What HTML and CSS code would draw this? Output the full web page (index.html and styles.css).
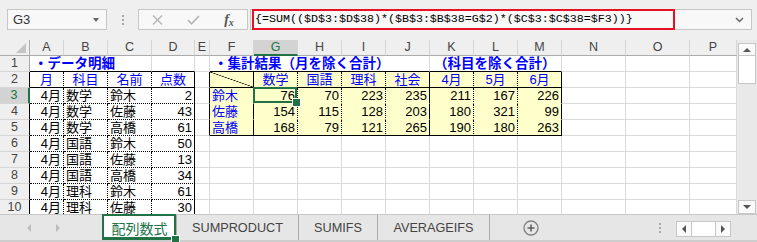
FILE: index.html
```html
<!DOCTYPE html>
<html lang="ja">
<head>
  <meta charset="UTF-8" />
  <meta name="viewport" content="width=device-width, initial-scale=1.0" />
  <title>配列数式</title>
  <link rel="stylesheet" href="styles.css">
</head>
<body>
  <div class="window">
    <div class="formula-bar">
      <div class="name-box"><span>G3</span><span class="drop"></span></div>
      <div class="grip"></div>
      <div class="fx-buttons">
        <span class="fx-slot">
          <svg width="11" height="10" viewBox="0 0 11 10"><path d="M1 0.5 L10 9.5 M10 0.5 L1 9.5" stroke="#b4b4b4" stroke-width="1.3" fill="none"/></svg>
        </span>
        <span class="fx-slot">
          <svg width="13" height="10" viewBox="0 0 13 10"><path d="M1 5 L4.5 8.8 L12 1" stroke="#b4b4b4" stroke-width="1.6" fill="none"/></svg>
        </span>
        <span class="fx-slot fx-text">f<span>x</span></span>
      </div>
      <div class="formula">
        <div class="formula-text">{=SUM(($D$3:$D$38)*($B$3:$B$38=G$2)*($C$3:$C$38=$F3))}</div>
        <svg class="chev" width="9" height="6" viewBox="0 0 9 6"><path d="M1 1 L4.5 4.5 L8 1" stroke="#666" stroke-width="1.5" fill="none"/></svg>
      </div>
    </div>

    <div class="sheet">
      <div class="grid" id="grid"></div>
      <div class="vscroll">
        <div class="sb-btn up"><span></span></div>
        <div class="sb-thumb"></div>
        <div class="sb-track"></div>
        <div class="sb-btn down"><span></span></div>
      </div>
    </div>

    <div class="tabs">
      <div class="tab-nav"><span class="arr arr-left"></span><span class="arr arr-right"></span></div>
      <div class="tab active">配列数式</div>
      <div class="tab tab-sumproduct">SUMPRODUCT</div>
      <div class="tab tab-sumifs">SUMIFS</div>
      <div class="tab tab-averageifs">AVERAGEIFS</div>
      <div class="add-sheet">
        <svg width="16" height="16" viewBox="0 0 16 16"><circle cx="8" cy="8" r="7" stroke="#808080" stroke-width="1.3" fill="none"/><path d="M8 4.5 V11.5 M4.5 8 H11.5" stroke="#606060" stroke-width="1.6"/></svg>
      </div>
      <div class="grip grip-h"></div>
      <div class="hscroll">
        <div class="hs-btn"><span class="hs-left"></span></div>
        <div class="hs-thumb"></div>
        <div class="hs-btn"><span class="hs-right"></span></div>
      </div>
    </div>
  </div>

  <script>
    const letters = "ABCDEFGHIJKLMNOP".split("");
    const detailHeads = ["月", "科目", "名前", "点数"];
    const detail = [
      ["4月", "数学", "鈴木", 2],
      ["4月", "数学", "佐藤", 43],
      ["4月", "数学", "高橋", 61],
      ["4月", "国語", "鈴木", 50],
      ["4月", "国語", "佐藤", 13],
      ["4月", "国語", "高橋", 34],
      ["4月", "理科", "鈴木", 61],
      ["4月", "理科", "佐藤", 30],
    ];
    const sumHeads = ["数学", "国語", "理科", "社会", "4月", "5月", "6月"];
    const summary = [
      ["鈴木", 76, 70, 223, 235, 211, 167, 226],
      ["佐藤", 154, 115, 128, 203, 180, 321, 99],
      ["高橋", 168, 79, 121, 265, 190, 180, 263],
    ];

    function cellFor(r, c) {
      const cls = ["cell"];
      let text = "";
      if (c <= 3) {
        // データ明細 A2:D10
        cls.push(c === 3 ? "v-solid" : "v-dot");
        cls.push(r === 2 ? "h-solid" : "h-dot");
        if (r === 2) {
          text = detailHeads[c];
          cls.push("head");
        } else {
          text = detail[r - 3][c];
          if (c === 0 || c === 3) cls.push("num");
        }
      } else if (c === 4) {
        if (r <= 5) cls.push("v-solid");
      } else if (c <= 12 && r <= 5) {
        // 集計結果 F2:M5
        cls.push("fill");
        cls.push(c === 5 || c === 9 || c === 12 ? "v-solid" : "v-dot");
        cls.push(r === 2 || r === 5 ? "h-solid" : "h-none");
        if (r === 2) {
          if (c === 5) cls.push("diag");
          else {
            text = sumHeads[c - 6];
            cls.push("head");
          }
        } else {
          text = summary[r - 3][c - 5];
          cls.push(c === 5 ? "name" : "num");
          if (r === 3 && c === 6) cls.push("active");
        }
      }
      return `<div class="${cls.join(" ")}">${text}</div>`;
    }

    function renderGrid() {
      let html = '<div class="corner"></div>';
      letters.forEach((l) => {
        html += `<div class="col-head${l === "G" ? " sel" : ""}">${l}</div>`;
      });
      for (let r = 1; r <= 10; r++) {
        let cls = "row-head";
        if (r >= 2) cls += " edge";
        if (r === 3) cls += " sel";
        html += `<div class="${cls}">${r}</div>`;
        if (r === 1) {
          html += '<div class="cell title top-line span3">・データ明細</div>';
          html += '<div class="cell top-line"></div>';
          html += '<div class="cell"></div>';
          html += '<div class="cell title top-line span5">・集計結果（月を除く合計）</div>';
          html += '<div class="cell title top-line span3">（科目を除く合計）</div>';
          html += '<div class="cell"></div><div class="cell"></div><div class="cell"></div>';
          continue;
        }
        letters.forEach((l, c) => {
          html += cellFor(r, c);
        });
      }
      document.getElementById("grid").innerHTML = html;
    }

    renderGrid();
  </script>
</body>
</html>
```

FILE: styles.css
```css
* {
  box-sizing: border-box;
}
body {
  margin: 0;
  background: #fff;
  font-family: "Liberation Sans", "Noto Sans CJK JP", sans-serif;
}
.window {
  width: 757px;
  height: 242px;
  overflow: hidden;
  background: #fff;
}

/* formula bar */
.formula-bar {
  height: 40px;
  display: flex;
  align-items: flex-start;
  padding-top: 9px;
  background: #efefef;
}
.name-box {
  margin-left: 7px;
  width: 100px;
  height: 21px;
  border: 1px solid #c6c6c6;
  background: #f8f8f8;
  display: flex;
  align-items: center;
  justify-content: space-between;
  padding: 0 7px 0 5px;
  font-size: 13px;
  color: #333;
}
.drop {
  border-left: 3.5px solid transparent;
  border-right: 3.5px solid transparent;
  border-top: 4px solid #666;
}
.grip {
  width: 31px;
  height: 21px;
  display: flex;
  justify-content: center;
  align-items: center;
}
.grip::before {
  content: "";
  height: 10px;
  border-left: 2px dotted #a8a8a8;
}
.fx-buttons {
  width: 110px;
  height: 21px;
  border: 1px solid #c6c6c6;
  background: #f8f8f8;
  display: flex;
  align-items: center;
}
.fx-slot {
  width: 36px;
  display: flex;
  justify-content: center;
  align-items: center;
}
.fx-text {
  font-family: "Liberation Serif", serif;
  font-style: italic;
  font-weight: bold;
  font-size: 14px;
  color: #555;
}
.fx-text span {
  font-size: 10px;
  margin-top: 5px;
}
.formula {
  margin-left: 2px;
  width: 502px;
  height: 21px;
  border: 1px solid #c6c6c6;
  background: #f8f8f8;
  display: flex;
  align-items: center;
}
.formula-text {
  margin: -1px 0 -1px 1px;
  height: 21px;
  width: 423px;
  border: 2px solid #e81123;
  padding-left: 1px;
  font-family: "Liberation Mono", monospace;
  font-size: 11.67px;
  line-height: 17px;
  color: #000;
  white-space: nowrap;
}
.chev {
  margin-left: auto;
  margin-right: 7px;
}

/* sheet grid */
.sheet {
  display: flex;
  height: 174px;
}
.grid {
  width: 737px;
  display: grid;
  grid-template-columns: 30px 34px 44px 44px 43px 15px repeat(8, 44px) 64px 64px 47px;
  grid-auto-rows: 16px;
  overflow: hidden;
  font-size: 13px;
  line-height: 15px;
  color: #000;
}
.corner {
  background: #efefef;
  border-right: 1px solid #ababab;
  border-bottom: 1px solid #ababab;
  position: relative;
}
.corner::after {
  content: "";
  position: absolute;
  right: 3px;
  bottom: 2px;
  border-left: 10px solid transparent;
  border-bottom: 10px solid #c4c4c4;
}
.col-head {
  background: #efefef;
  border-right: 1px solid #d5d5d5;
  border-bottom: 1px solid #ababab;
  text-align: center;
  font-size: 12.5px;
  color: #444;
}
.col-head.sel {
  background: #d3d3d3;
  color: #217346;
  border-bottom: 2px solid #217346;
}
.row-head {
  background: #efefef;
  border-right: 1px solid #ababab;
  border-bottom: 1px solid #d5d5d5;
  text-align: center;
  font-size: 12.5px;
  color: #444;
}
.row-head.edge {
  border-right-color: #000;
}
.row-head.sel {
  background: #d3d3d3;
  color: #217346;
  border-right: 2px solid #217346;
}
.cell {
  border-right: 1px solid #dadada;
  border-bottom: 1px solid #dadada;
  padding: 0 2px;
  white-space: nowrap;
}
.span3 {
  grid-column: span 3;
}
.span5 {
  grid-column: span 5;
}
.top-line {
  border-bottom: 1px solid #000;
}
.v-dot {
  border-right: 1px dotted #000;
}
.v-solid {
  border-right: 1px solid #000;
}
.h-solid {
  border-bottom: 1px solid #000;
}
.h-dot {
  border-bottom: 1px dotted #000;
}
.fill {
  background: #ffffcc;
}
.h-none {
  border-bottom-color: #ffffcc;
}
.title {
  color: #0000ff;
  font-weight: bold;
  font-size: 13.5px;
  padding-left: 4px;
}
.head {
  color: #0000ff;
  text-align: center;
}
.name {
  color: #0000ff;
}
.num {
  text-align: right;
}
.diag {
  background: linear-gradient(to top right, #ffffcc calc(50% - 0.6px), #000 50%, #ffffcc calc(50% + 0.6px));
}
.active {
  position: relative;
  z-index: 1;
}
.active::before {
  content: "";
  position: absolute;
  top: -1px;
  left: -1px;
  right: 0;
  bottom: 0;
  border: 2px solid #217346;
}
.active::after {
  content: "";
  position: absolute;
  right: -4px;
  bottom: -4px;
  width: 7px;
  height: 7px;
  background: #217346;
  border: 1px solid #fff;
}

/* vertical scrollbar */
.vscroll {
  width: 20px;
  display: flex;
  flex-direction: column;
  padding: 3px 1px 0 1px;
  background: #e9e9e9;
}
.sb-btn {
  height: 13px;
  background: #fafafa;
  border: 1px solid #c6c6c6;
  display: flex;
  justify-content: center;
  align-items: center;
}
.sb-btn.down {
  height: 14px;
}
.sb-btn.up span {
  border-left: 4px solid transparent;
  border-right: 4px solid transparent;
  border-bottom: 4px solid #555;
}
.sb-btn.down span {
  border-left: 4px solid transparent;
  border-right: 4px solid transparent;
  border-top: 4px solid #555;
}
.sb-thumb {
  height: 28px;
  background: #fff;
  border: 1px solid #c6c6c6;
  border-top: none;
}
.sb-track {
  flex: 1;
}

/* sheet tabs */
.tabs {
  height: 28px;
  display: flex;
  background: #e6e6e6;
  border-top: 1px solid #c6c6c6;
  border-bottom: 2px solid #cdcdcd;
  font-size: 12.7px;
  color: #444;
}
.tab-nav {
  width: 102px;
  display: flex;
  align-items: center;
}
.arr {
  border-top: 4px solid transparent;
  border-bottom: 4px solid transparent;
}
.arr-left {
  margin-left: 27px;
  border-right: 4px solid #bcbcbc;
}
.arr-right {
  margin-left: 25px;
  border-left: 4px solid #bcbcbc;
}
.tab {
  display: flex;
  align-items: center;
  justify-content: center;
  border-right: 1px solid #ababab;
}
.tab.active {
  width: 75px;
  background: #fff;
  color: #217346;
  border-left: 1px solid #ababab;
  box-shadow: inset 0 -3px 0 #217346;
  font-family: "Noto Sans CJK JP", sans-serif;
  font-size: 14px;
}
.tab-sumproduct {
  width: 122px;
}
.tab-sumifs {
  width: 79px;
}
.tab-averageifs {
  width: 112px;
}
.add-sheet {
  margin-left: 33px;
  display: flex;
  align-items: center;
}
.grip-h {
  width: 2px;
  margin-left: 120px;
  height: auto;
}
.hscroll {
  margin-left: 15px;
  align-self: center;
  margin-top: 3px;
  display: flex;
  height: 16px;
}
.hs-btn {
  width: 16px;
  border: 1px solid #c6c6c6;
  background: #fafafa;
  display: flex;
  justify-content: center;
  align-items: center;
}
.hs-thumb {
  width: 23px;
  background: #fff;
  border-top: 1px solid #c6c6c6;
  border-bottom: 1px solid #c6c6c6;
}
.hs-left {
  border-top: 4px solid transparent;
  border-bottom: 4px solid transparent;
  border-right: 4px solid #555;
}
.hs-right {
  border-top: 4px solid transparent;
  border-bottom: 4px solid transparent;
  border-left: 4px solid #555;
}
```
